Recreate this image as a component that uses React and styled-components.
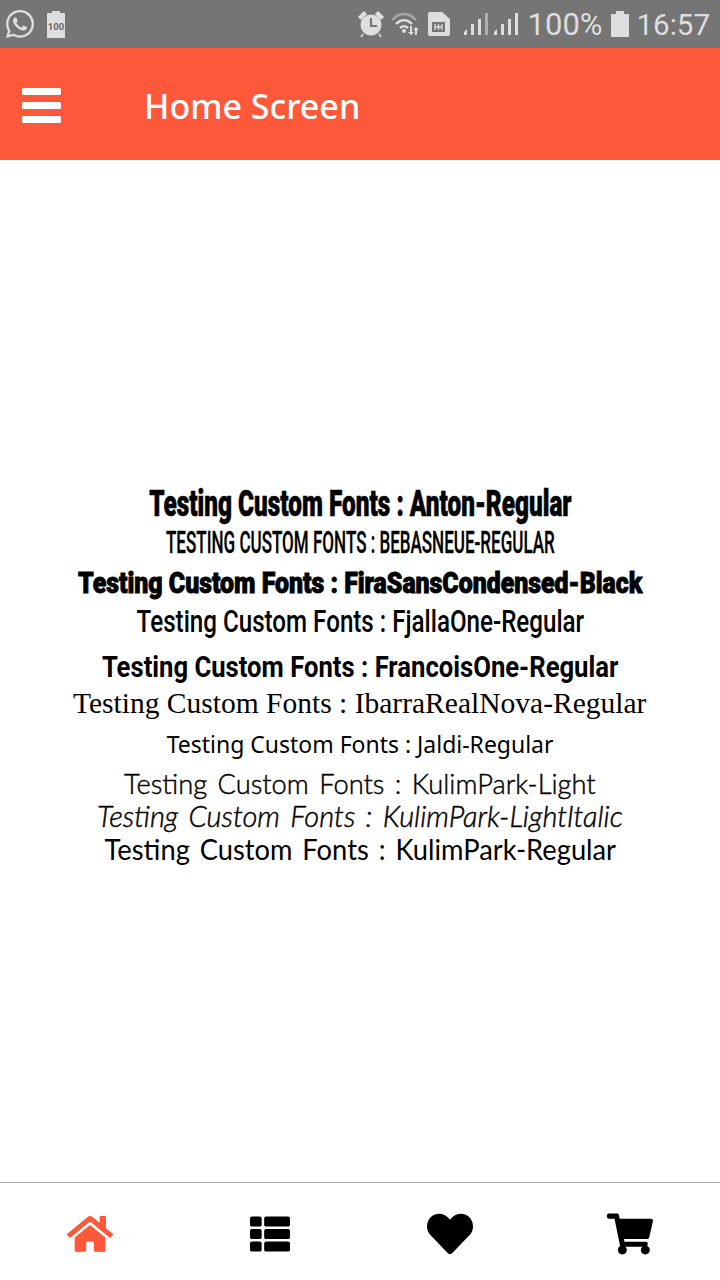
import React from "react";
import styled, { createGlobalStyle } from "styled-components";
import { FaHome, FaThList, FaHeart, FaShoppingCart, FaWhatsapp } from "react-icons/fa";

const Global = createGlobalStyle`
  html, body { margin: 0; padding: 0; background: #fff; }
  #root { width: 720px; height: 1280px; }
`;
const Screen = styled.div`
  width: 720px; height: 1280px; display: flex; flex-direction: column; overflow: hidden;
  font-family: "Noto Sans", sans-serif; background: #fff;
`;
const StatusBar = styled.div`
  height: 48px; flex: none; background: #757575; color: #dedede;
  display: flex; align-items: center; justify-content: space-between; padding: 0 10px 0 4px;
`;
const StatusGroup = styled.div`
  display: flex; align-items: center; gap: ${p => p.$gap}px; margin-left: ${p => p.$ml || 0}px;
`;
const StatusText = styled.span`
  font-family: Roboto, sans-serif; font-size: ${p => p.$size}px; line-height: 48px; color: #dedede;
  margin-left: ${p => p.$ml || 0}px; padding-top: 1px;
`;
const StatusIcon = styled.svg`display: block; flex: none; margin-left: ${p => p.$ml || 0}px;`;
const AppBar = styled.header`
  height: 112px; flex: none; background: #ff583b; display: flex; align-items: center; padding-left: 22px; box-sizing: border-box;
`;
const Burger = styled.div`display: flex; flex-direction: column; gap: 7px; width: 39px; margin: 2px 83px 0 0;`;
const BurgerBar = styled.span`display: block; height: 7px; background: #fff; border-radius: 1.5px;`;
const Title = styled.h1`
  margin: 4px 0 0; font-family: "Noto Sans", sans-serif; font-weight: 500; font-size: 34px; line-height: 44px; color: #fff;
`;
const Main = styled.main`
  flex: 1; display: flex; flex-direction: column; padding-top: 328px; box-sizing: border-box;
`;
const FontLine = styled.div`
  height: 32px; line-height: 32px; margin-top: ${p => p.$gap}px; display: flex; justify-content: center; white-space: nowrap; color: #000;
  font-family: ${p => p.$family}; font-size: ${p => p.$size}px; font-weight: ${p => p.$weight || 400};
  font-style: ${p => p.$italic ? "italic" : "normal"};
  text-transform: ${p => p.$upper ? "uppercase" : "none"};
  word-spacing: ${p => p.$ws || 0}px;
  -webkit-text-stroke: ${p => p.$stroke || 0}px #000;
  span { display: block; flex: none; transform: scaleX(${p => p.$sx}); transform-origin: center; }
`;
const TabBar = styled.nav`
  height: 98px; flex: none; border-top: 1px solid #a9a9a9; display: grid; grid-template-columns: repeat(4, 1fr); box-sizing: border-box;
`;
const Tab = styled.div`
  display: flex; align-items: center; justify-content: center; padding-top: 4px; color: ${p => p.$active ? "#ff583b" : "#000"};
`;

const lines = [
  { t: "Anton-Regular", family: "Roboto, sans-serif", size: 36, weight: 900, sx: 0.676, gap: 0, stroke: 0.6 },
  { t: "BebasNeue-Regular", family: "Roboto, sans-serif", size: 32, weight: 500, sx: 0.532, gap: 6, upper: true, stroke: 0.3 },
  { t: "FiraSansCondensed-Black", family: "Roboto, sans-serif", size: 29, weight: 900, sx: 0.857, gap: 9, stroke: 0.9 },
  { t: "FjallaOne-Regular", family: "Roboto, sans-serif", size: 32, weight: 500, sx: 0.755, gap: 6 },
  { t: "FrancoisOne-Regular", family: "Roboto, sans-serif", size: 29, weight: 700, sx: 0.884, gap: 14 },
  { t: "IbarraRealNova-Regular", family: '"Liberation Serif", serif', size: 29, sx: 1.018, gap: 4 },
  { t: "Jaldi-Regular", family: '"Noto Sans", sans-serif', size: 24, sx: 0.957, gap: 9 },
  { t: "KulimPark-Light", family: "Lato, sans-serif", size: 28, weight: 300, sx: 0.975, gap: 7, ws: 3, stroke: 0.45 },
  { t: "KulimPark-LightItalic", family: "Lato, sans-serif", size: 29, weight: 300, italic: true, sx: 1, gap: 1, ws: 3, stroke: 0.45 },
  { t: "KulimPark-Regular", family: "Lato, sans-serif", size: 28, sx: 0.975, gap: 1, ws: 3 },
];

const Signal = ({ op }) => (
  <StatusIcon width="26" height="26" viewBox="0 0 26 26">
    <path d="M1 24v-3l3-3v6zM8 24V13h3v11zM15 24V8h3v16z" fill="#dedede" />
    <path d="M22 24V2h3v22z" fill="#dedede" opacity={op} />
  </StatusIcon>
);

export default function App() {
  return (
    <Screen>
      <Global />
      <StatusBar>
        <StatusGroup $gap={11}>
          <FaWhatsapp size={32} />
          <StatusIcon width="18" height="27" viewBox="0 0 18 27">
            <path d="M5 0h8v2h5v25H0V2h5z" fill="#dedede" />
            <text x="9" y="19" fontFamily="Roboto, sans-serif" fontSize="9.5" fontWeight="700" fill="#666" textAnchor="middle">100</text>
          </StatusIcon>
        </StatusGroup>
        <StatusGroup $gap={8}>
          <StatusIcon width="28" height="28" viewBox="0 0 28 28">
            <circle cx="14" cy="15" r="10.500" fill="#dedede" />
            <path d="M14 8v8h6" fill="none" stroke="#757575" strokeWidth="2" />
            <path d="M2 7l5-5 2 2-5 5zM26 7l-5-5-2 2 5 5zM6 24l-2 3M22 24l2 3" stroke="#dedede" strokeWidth="1.5" fill="#dedede" />
          </StatusIcon>
          <StatusIcon width="30" height="26" viewBox="0 0 30 26" $ml={-2}>
            <path d="M1 9C8 1 18 1 25 9" fill="none" stroke="#a8a8a8" strokeWidth="2.4" />
            <path d="M5 13c5-5 11-5 16 0" fill="none" stroke="#dedede" strokeWidth="2.4" />
            <path d="M9 17c3-2.500 5-2.500 8 0" fill="none" stroke="#dedede" strokeWidth="2.400" />
            <circle cx="13" cy="20" r="2" fill="#dedede" />
            <path d="M19 15h2v6h2l-3 3-3-3h2zM26 24h-2v-5h-2l3-3 3 3h-2z" fill="#dedede" />
          </StatusIcon>
          <StatusIcon width="24" height="26" viewBox="0 0 24 26" $ml={-2}>
            <path d="M3 1h12l8 7v15a2 2 0 0 1-2 2H3a2 2 0 0 1-2-2V3a2 2 0 0 1 2-2z" fill="#dedede" />
            <rect x="5" y="11" width="13" height="10" fill="#757575" />
            <path d="M8 13v6M15 13v6M8 16h7M11.500 13v6" stroke="#dedede" strokeWidth="1.300" />
          </StatusIcon>
          <StatusGroup $gap={4} $ml={4}>
            <Signal op={0.55} />
            <Signal op={1} />
          </StatusGroup>
          <StatusText $size={31} $ml={1}>100%</StatusText>
          <StatusIcon width="18" height="26" viewBox="0 0 18 26">
            <path d="M5 0h8v3h5v23H0V3h5z" fill="#dedede" />
          </StatusIcon>
          <StatusText $size={29.5}>16:57</StatusText>
        </StatusGroup>
      </StatusBar>
      <AppBar>
        <Burger><BurgerBar /><BurgerBar /><BurgerBar /></Burger>
        <Title>Home Screen</Title>
      </AppBar>
      <Main>
        {lines.map(l => (
          <FontLine key={l.t} $family={l.family} $size={l.size} $weight={l.weight} $sx={l.sx} $gap={l.gap} $upper={l.upper} $italic={l.italic} $ws={l.ws} $stroke={l.stroke}>
            <span>Testing Custom Fonts : {l.t}</span>
          </FontLine>
        ))}
      </Main>
      <TabBar>
        <Tab $active><FaHome size={46} /></Tab>
        <Tab><FaThList size={40} /></Tab>
        <Tab><FaHeart size={46} /></Tab>
        <Tab><FaShoppingCart size={46} /></Tab>
      </TabBar>
    </Screen>
  );
}
